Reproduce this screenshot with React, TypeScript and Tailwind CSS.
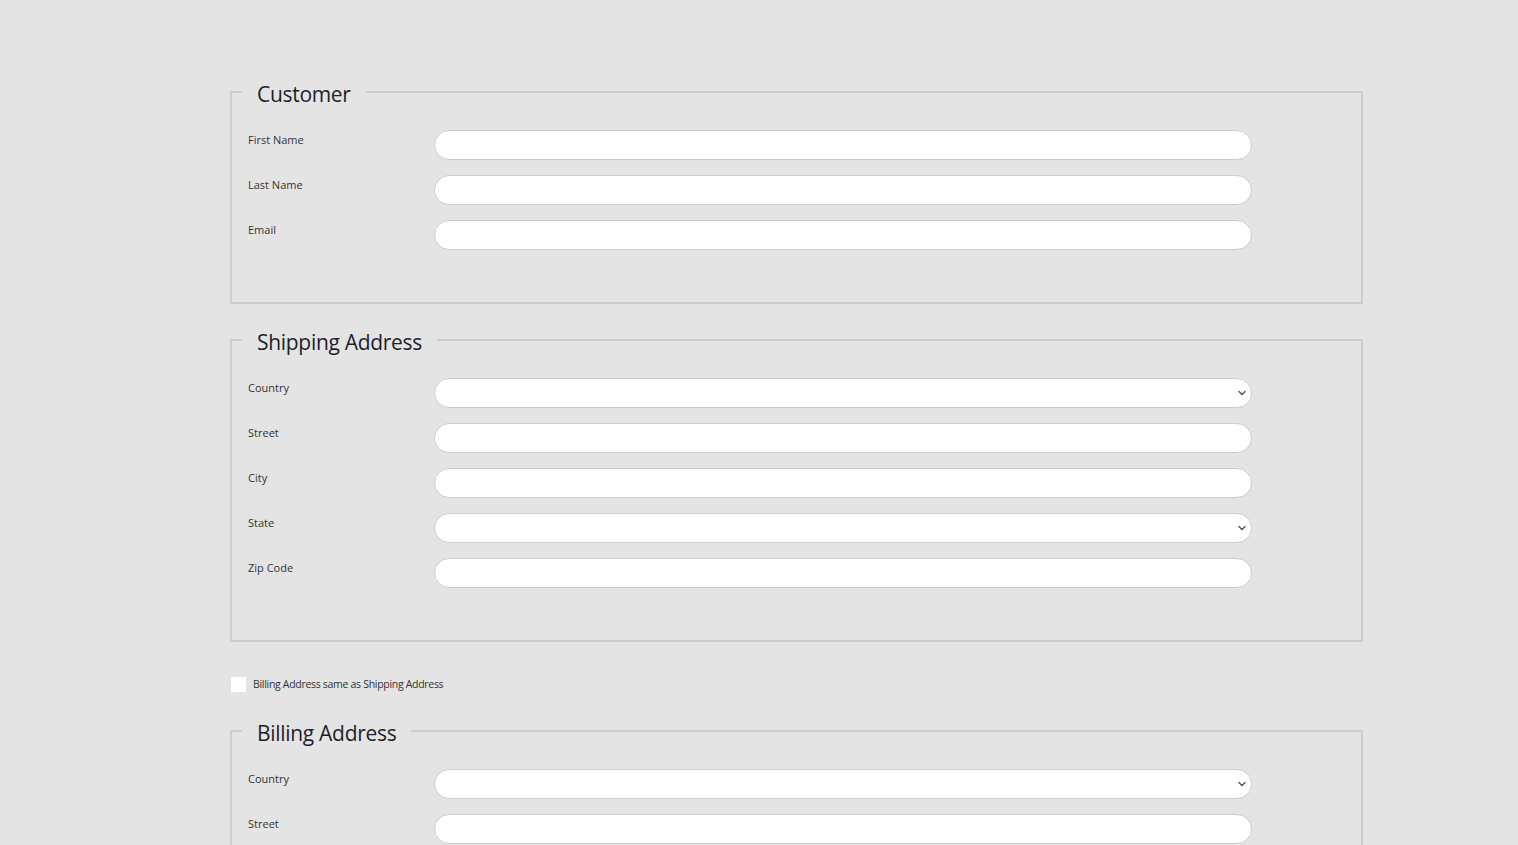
import React from 'react';

type Field = { label: string; select?: boolean };

const customerFields: Field[] = [
  { label: 'First Name' },
  { label: 'Last Name' },
  { label: 'Email' },
];

const addressFields: Field[] = [
  { label: 'Country', select: true },
  { label: 'Street' },
  { label: 'City' },
  { label: 'State', select: true },
  { label: 'Zip Code' },
];

const Chevron = () => (
  <svg
    className="absolute right-[5px] top-1/2 -translate-y-1/2"
    width="10"
    height="10"
    viewBox="0 0 10 10"
    fill="none"
  >
    <path d="M2 3.5 L5 6.5 L8 3.5" stroke="#555" strokeWidth="1.4" strokeLinecap="round" strokeLinejoin="round" />
  </svg>
);

const FormRow: React.FC<Field> = ({ label, select }) => (
  <div className="flex items-start">
    <label className="w-[186px] shrink-0 text-[11px] leading-[19px] text-[#333]">{label}</label>
    <div className="relative w-[818px]">
      <div className="h-[30px] w-full rounded-full border border-[#cccccc] bg-white" />
      {select && <Chevron />}
    </div>
  </div>
);

const Section: React.FC<{ title: string; fields: Field[]; className?: string }> = ({ title, fields, className }) => (
  <fieldset className={`w-[1133px] border-2 border-[#cdcdcd] px-[16px] pt-[23px] pb-[52px] ${className ?? ''}`}>
    <legend className="-ml-[6px] px-[15px] text-[21px] font-medium leading-[30px] tracking-[-0.3px] text-[#1f1f2b]">
      <span className="inline-block translate-y-[2px]">{title}</span>
    </legend>
    <div className="flex flex-col gap-[15px]">
      {fields.map((f) => (
        <FormRow key={f.label} {...f} />
      ))}
    </div>
  </fieldset>
);

export default function App() {
  return (
    <div
      className="min-h-[845px] w-full overflow-hidden bg-[#e4e4e4] pl-[230px] pt-[77px]"
      style={{ fontFamily: '"Open Sans", "Noto Sans", sans-serif' }}
    >
      <Section title="Customer" fields={customerFields} />
      <Section title="Shipping Address" fields={addressFields} className="mt-[21px]" />

      <div className="mt-[35px] flex items-center gap-[7px] pl-[1px]">
        <div className="h-[15px] w-[15px] bg-white" />
        <span className="text-[10.5px] leading-[15px] tracking-[-0.3px] text-[#333]">
          Billing Address same as Shipping Address
        </span>
      </div>

      <Section title="Billing Address" fields={addressFields} className="mt-[24px]" />
    </div>
  );
}
